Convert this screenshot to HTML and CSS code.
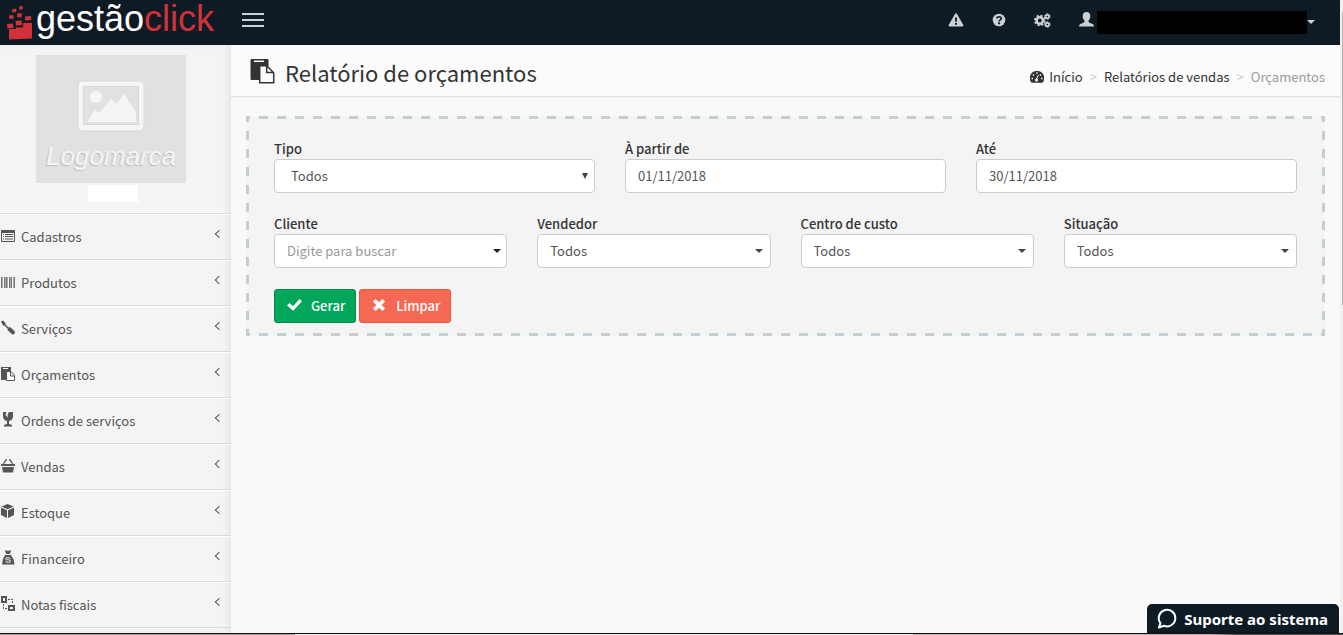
FILE: index.html
```
<!DOCTYPE html>
<html lang="pt-BR">
<head>
    <meta charset="UTF-8">
    <meta name="viewport" content="width=device-width, initial-scale=1.0">
    <title>Relatório de orçamentos</title>
    <link rel="stylesheet" href="styles.css">
</head>
<body>
    <header class="topbar">
        <a href="#" class="brand">
            <svg class="brand-mark" width="26" height="34" viewBox="0 0 26 34" fill="#d13239">
                <path d="M2 33.500V23h7v-2h7v-4h9v15.500z"/>
                <path d="M0 18l6-.5.5 4.500-6 .5zM8.500 15l6-.5.5 4.500-6 .5zM18 10.500l6-.5.3 4-6 .5zM2 9.500l4-.5 1 3.500-4.500.5zM10.500 7l4.500.5-.5 4-4.500-.5zM5 3.500l4-1 .5 3.500-4 .5zM12 .5l3.500-.5.5 3-3.500 1z"/>
                <path d="M9 21.500h7V17" stroke="#861f2a" fill="none"/>
            </svg>
            <span class="brand-name">gestão<span class="brand-red">click</span></span>
        </a>
        <button type="button" class="menu-toggle" aria-label="Menu"><span></span><span></span><span></span></button>
        <nav class="top-actions">
            <a href="#" aria-label="Alertas">
                <svg width="16" height="14" viewBox="0 0 16 14"><path fill="currentColor" fill-rule="evenodd" d="M8 0.300c.4 0 .7.2.9.500l6.400 11.200c.4.700 0 1.500-.9 1.500H1.600c-.9 0-1.300-.8-.9-1.500L7.100.8c.2-.3.500-.5.900-.5zM7 4.500l.3 4.500h1.400L9 4.500zM7 10v1.800h2V10z"/></svg>
            </a>
            <a href="#" aria-label="Ajuda">
                <svg width="14" height="14" viewBox="0 0 14 14"><circle cx="7" cy="7" r="6.300" fill="currentColor"/><path d="M4.900 5.400C5 3.200 9.200 3.200 9.200 5.400 9.200 6.800 7.100 6.900 7.100 8.500" fill="none" stroke="#0e1b25" stroke-width="1.700"/><path fill="#0e1b25" d="M6.100 9.400h2v1.800h-2z"/></svg>
            </a>
            <a href="#" aria-label="Configurações">
                <svg width="17" height="15" viewBox="0 0 17 15" fill="none" stroke="currentColor"><circle cx="5.800" cy="7.500" r="3.200" stroke-width="2.600"/><circle cx="5.800" cy="7.500" r="4.900" stroke-width="1.800" stroke-dasharray="2.200 1.650"/><circle cx="13.300" cy="3.500" r="1.700" stroke-width="1.700"/><circle cx="13.300" cy="3.500" r="2.800" stroke-dasharray="1.700 1.230"/><circle cx="13.300" cy="11.500" r="1.700" stroke-width="1.700"/><circle cx="13.300" cy="11.500" r="2.800" stroke-dasharray="1.700 1.230"/></svg>
            </a>
            <a href="#" class="user" aria-label="Usuário">
                <svg width="15" height="15" viewBox="0 0 15 15"><path fill="currentColor" d="M7.500 0C9.900 0 11.300 1.500 11.300 4c0 2-.8 3.600-1.800 4.700v1.400c.8.900 3.600 1.300 4.800 2.400.5.500.7 1.200.7 2H0c0-.8.200-1.500.7-2 1.200-1.100 4-1.500 4.800-2.400V8.700C4.500 7.600 3.700 6 3.700 4 3.700 1.500 5.100 0 7.500 0z"/></svg>
                <span class="user-name"></span>
                <span class="caret"></span>
            </a>
        </nav>
    </header>

    <div class="wrapper">
        <aside class="sidebar">
            <div class="company">
                <div class="company-logo">
                    <svg width="68" height="52" viewBox="0 0 68 52">
                        <rect x="1" y="1" width="66" height="50" rx="4" fill="#f5f5f5" stroke="#d9d9d9"/>
                        <path fill="#e1e1e1" stroke="#d6d6d6" d="M6.500 6.500h55v38h-55z"/>
                        <circle cx="19" cy="17" r="6" fill="#f5f5f5"/>
                        <path fill="#f5f5f5" d="M10 42l8-12 4 3 12-14 5 5 8-10 12 18v10z"/>
                    </svg>
                    <span>Logomarca</span>
                </div>
                <div class="company-name"></div>
            </div>
            <nav class="menu">
                <a href="#">
                    <svg viewBox="0 0 16 16"><path fill="currentColor" fill-rule="evenodd" d="M2 2h12q1 0 1 1v10q0 1-1 1H2q-1 0-1-1V3q0-1 1-1zm0 3v8h12V5z"/><path stroke="currentColor" d="M3 6.500h1M5 6.500h8M3 8.500h1M5 8.500h8M3 11h1M5 11h8"/></svg>
                    <span>Cadastros</span>
                </a>
                <a href="#">
                    <svg viewBox="0 0 16 16"><path stroke="#777" d="M1.500 3v11M4.500 3v11M6.500 3v11M9.500 3v11M11.500 3v11"/><path stroke="#aaa" d="M2.500 3v11M5.500 3v11M7.500 3v11M10.500 3v11M13.500 3v11"/><path stroke="#777" d="M14.500 3v11"/></svg>
                    <span>Produtos</span>
                </a>
                <a href="#">
                    <svg viewBox="0 0 16 16"><path fill="currentColor" d="M1 1.500l2-1 2.500 2.500v1.500l3 3 1.500-.4 4.500 4c1.500 2-.8 4.500-2.800 3L7.500 10l.2-1.300L4.300 5.500l-1.300.1z"/></svg>
                    <span>Serviços</span>
                </a>
                <a href="#">
                    <svg viewBox="0 0 16 16"><path fill="currentColor" d="M1 1h10v4H7v9H1z"/><path fill="#f4f4f4" d="M3 2h5v1H3z"/><path fill="#fff" stroke="currentColor" d="M6.500 5.500h4.500l3.500 4v5h-8zM10.500 6v4h4"/></svg>
                    <span>Orçamentos</span>
                </a>
                <a href="#">
                    <svg viewBox="0 0 16 16"><path fill="currentColor" d="M3 0h3.500L5.500 3l2.500 2.500L7.500 2.500 9 0h4v4c0 3-1.500 4.500-4 5v3l3 1v1.500H4V13l3-1V9C4.500 8.500 3 7 3 4z"/></svg>
                    <span>Ordens de serviços</span>
                </a>
                <a href="#">
                    <svg viewBox="0 0 16 16"><path fill="none" stroke="currentColor" stroke-width="1.300" d="M3.500 6L6 1.500M12.500 6L10 1.500M6 2h1M9 2h1"/><path fill="currentColor" d="M1 6h14v2H1zM2 9h12l-1 5.500H3z"/></svg>
                    <span>Vendas</span>
                </a>
                <a href="#">
                    <svg viewBox="0 0 16 16"><path fill="currentColor" d="M7.500 0l6 2.500-6 2.700-6-2.700zM1 3.500l6 2.800V14l-6-3zM14 3.500L8 6.300V14l6-3z"/></svg>
                    <span>Estoque</span>
                </a>
                <a href="#">
                    <svg viewBox="0 0 16 16"><path fill="currentColor" d="M5 0l3 1 3-1-1 4H6zM5 5h6l2.500 4 1 5.500H2l1-5.500z"/><path fill="none" stroke="#f4f4f4" d="M10.500 8.500c-2-1.500-5-1-5 .5s5 0 5 2-3.500 1.500-5 .5"/></svg>
                    <span>Financeiro</span>
                </a>
                <a href="#">
                    <svg viewBox="0 0 16 16"><path fill="none" stroke="currentColor" stroke-width="2" d="M2 1h4v5H2zM9 10h5v4H9z"/><path stroke="currentColor" stroke-dasharray="2 1" fill="none" d="M8 3.500h4.500V8M3.500 8v4.500h4"/></svg>
                    <span>Notas fiscais</span>
                </a>
            </nav>
        </aside>

        <main class="content">
            <div class="content-header">
                <h1>
                    <svg width="25" height="25" viewBox="0 0 25 25"><path fill="currentColor" d="M1.500 0h16q1 0 1 1v6h-8v14H1.500q-1 0-1-1V1q0-1 1-1z"/><path fill="#fbfbfb" d="M4 1.500h10V3H4z"/><path fill="#fbfbfb" stroke="currentColor" stroke-width="1.500" d="M9.700 6.700h7l7 7v10h-14zM16.700 7v6.500h7"/></svg>
                    Relatório de orçamentos
                </h1>
                <ol class="breadcrumb">
                    <li><a href="#">
                        <svg width="14" height="12" viewBox="0 0 14 12"><path fill="currentColor" d="M7 0a7 7 0 0 1 6 11l-.5.800h-11L1 11A7 7 0 0 1 7 0z"/><path fill="none" stroke="#fbfbfb" stroke-width="1.500" d="M1.500 7.500H3M3 3.500l1 1M6.300 2h1.400M10 4.500l1-1M11 7.500h1.500"/><path fill="none" stroke="#fbfbfb" d="M6 9l2.500-5"/><circle cx="6.500" cy="9" r="1.500" fill="#fbfbfb"/></svg>
                        Início</a></li>
                    <li><a href="#">Relatórios de vendas</a></li>
                    <li class="active">Orçamentos</li>
                </ol>
            </div>

            <form class="filters">
                <div class="row">
                    <div class="field">
                        <label for="tipo">Tipo</label>
                        <div class="control native">
                            <select id="tipo"><option>Todos</option></select>
                        </div>
                    </div>
                    <div class="field">
                        <label for="de">À partir de</label>
                        <input type="text" id="de" value="01/11/2018">
                    </div>
                    <div class="field">
                        <label for="ate">Até</label>
                        <input type="text" id="ate" value="30/11/2018">
                    </div>
                </div>
                <div class="row">
                    <div class="field">
                        <label for="cliente">Cliente</label>
                        <div class="control dark">
                            <input type="text" id="cliente" placeholder="Digite para buscar">
                        </div>
                    </div>
                    <div class="field">
                        <label for="vendedor">Vendedor</label>
                        <div class="control">
                            <select id="vendedor"><option>Todos</option></select>
                        </div>
                    </div>
                    <div class="field">
                        <label for="centro">Centro de custo</label>
                        <div class="control">
                            <select id="centro"><option>Todos</option></select>
                        </div>
                    </div>
                    <div class="field">
                        <label for="situacao">Situação</label>
                        <div class="control">
                            <select id="situacao"><option>Todos</option></select>
                        </div>
                    </div>
                </div>
                <div class="buttons">
                    <button type="button" class="btn btn-success">
                        <svg width="15" height="14" viewBox="0 0 15 14"><path fill="currentColor" d="M0 7.500L2.500 5 6 8.300 12.500 1 15 3.300 6.200 12.800z"/></svg>
                        Gerar
                    </button>
                    <button type="button" class="btn btn-danger">
                        <svg width="15" height="14" viewBox="0 0 15 14"><path fill="currentColor" d="M1 3.500L3.500 1 7 4.200 10.500 1 13 3.500 9.700 7 13 10.500 10.500 13 7 9.700 3.500 13 1 10.500 4.300 7z"/></svg>
                        Limpar
                    </button>
                </div>
            </form>
        </main>
    </div>

    <div class="scrollbar"></div>
    <button type="button" class="support">
        <svg width="20" height="21" viewBox="0 0 20 21"><path fill="none" stroke="currentColor" stroke-width="2" stroke-linejoin="round" d="M3.500 15.200A8.300 8.300 0 1 1 7 17.800L1.800 19.500z"/></svg>
        Suporte ao sistema
    </button>
    <div class="bottom-edge"></div>
</body>
</html>
```
FILE: styles.css
```
* {
    box-sizing: border-box;
}

body {
    margin: 0;
    padding-right: 3px;
    height: 100vh;
    overflow: hidden;
    display: flex;
    flex-direction: column;
    font-family: "Noto Sans CJK SC", sans-serif;
    font-size: 13px;
    line-height: 20px;
    color: #333;
    background-color: #f9f9f9;
}

a {
    color: inherit;
    text-decoration: none;
}

svg {
    display: block;
    flex: none;
}

input,
select,
button {
    font: inherit;
}

/* topbar */
.topbar {
    display: flex;
    flex: none;
    align-items: center;
    height: 45px;
    padding: 0 24px 0 7px;
    background-color: #0e1b25;
    color: #ccd0d3;
}

.brand {
    display: flex;
    align-items: center;
    gap: 3px;
    height: 45px;
}

.brand-name {
    font-family: "Liberation Sans", Arial, sans-serif;
    font-size: 36px;
    line-height: 36px;
    padding-bottom: 8px;
    color: #fff;
}

.brand-red {
    color: #d13239;
}

.menu-toggle {
    display: flex;
    flex-direction: column;
    gap: 4px;
    margin-left: 28px;
    margin-bottom: 5px;
    padding: 0;
    border: none;
    background: none;
}

.menu-toggle span {
    width: 22px;
    height: 2px;
    background-color: #ccd0d3;
}

.top-actions {
    display: flex;
    align-items: center;
    gap: 28px;
    margin-left: auto;
    padding-bottom: 5px;
}

.user {
    display: flex;
    align-items: center;
    height: 24px;
}

.user svg {
    margin-bottom: 2px;
}

.user-name {
    width: 210px;
    height: 23px;
    margin: 4px 0 0 3px;
    background-color: #000;
}

.caret {
    border: 4px solid transparent;
    border-top-color: currentColor;
    border-bottom: none;
    margin: 4px 1px 0 0;
}

/* sidebar */
.wrapper {
    display: flex;
    flex: 1;
    min-height: 0;
}

.sidebar {
    flex: none;
    width: 231px;
    overflow: hidden;
    background-color: #f4f4f4;
    box-shadow: inset -4px 0 8px -2px rgba(0, 0, 0, 0.07);
    color: #555;
}

.company {
    display: flex;
    flex-direction: column;
    align-items: center;
    gap: 2px;
    padding: 10px 9px 11px 0;
}

.company-logo {
    display: flex;
    flex-direction: column;
    align-items: center;
    gap: 9px;
    width: 150px;
    height: 128px;
    padding-top: 25px;
    background-color: #e1e1e1;
    font: italic 26px/30px "Liberation Sans", Arial, sans-serif;
    color: #f5f5f5;
    text-shadow: -1px 1px 1px #bbb;
}

.company-name {
    width: 50px;
    height: 17px;
    margin-left: 4px;
    background-color: #fff;
}

.menu a {
    display: flex;
    align-items: center;
    gap: 5px;
    height: 46px;
    padding: 0 9px 0 0;
    border-top: 1px solid #d8d8d8;
    box-shadow: inset 0 1px #fff;
}

.menu a:last-child {
    height: 47px;
    border-bottom: 1px solid #d8d8d8;
}

.menu svg {
    width: 16px;
    height: 16px;
    margin-bottom: 2px;
}

.menu a::after {
    content: "";
    width: 5px;
    height: 5px;
    margin: 0 0 6px auto;
    border: solid #555;
    border-width: 0 0 1px 1px;
    transform: rotate(45deg);
}

/* content */
.content {
    flex: 1;
    min-width: 0;
}

.content-header {
    display: flex;
    align-items: center;
    justify-content: space-between;
    height: 52px;
    padding: 0 15px 0 19px;
    background-color: #fbfbfb;
    border-bottom: 1px solid #e2e2e2;
    box-shadow: 0 1px 1px rgba(0, 0, 0, 0.04);
}

.content-header h1 {
    display: flex;
    align-items: center;
    gap: 10px;
    margin: 0;
    padding-top: 2px;
    font-size: 22px;
    line-height: 30px;
    font-weight: 400;
}

.breadcrumb {
    display: flex;
    margin: 0;
    padding: 13px 0 0;
    list-style: none;
}

.breadcrumb li,
.breadcrumb a {
    display: flex;
    align-items: center;
}

.breadcrumb a {
    gap: 5px;
}

.breadcrumb li + li::before {
    content: ">";
    padding: 0 7px;
    color: #ccc;
}

.breadcrumb .active {
    color: #999;
}

/* dashed box: 9px dashes with 9px gaps on the four sides */
.filters {
    --h-dash: repeating-linear-gradient(90deg, #c3ced5 0 4px, transparent 4px 13px, #c3ced5 13px 18px);
    --v-dash: repeating-linear-gradient(#c3ced5 0 6px, transparent 6px 15px, #c3ced5 15px 18px);
    margin: 19px 15px 0;
    padding: 23px 28px 13px;
    background:
        var(--h-dash) top / 100% 3px no-repeat,
        var(--h-dash) bottom / 100% 3px no-repeat,
        var(--v-dash) left / 3px 100% no-repeat,
        var(--v-dash) right / 3px 100% no-repeat,
        #f4f4f4;
}

.row {
    display: flex;
    gap: 30px;
    margin-bottom: 21px;
}

.field {
    flex: 1;
    min-width: 0;
}

.field label {
    display: block;
    font-weight: 500;
}

.field input,
.field select {
    display: block;
    width: 100%;
    height: 34px;
    padding: 0 12px;
    border: 1px solid #ccc;
    border-radius: 4px;
    background-color: #fff;
    color: #555;
    appearance: none;
}

.field input {
    padding-bottom: 2px;
}

.field input::placeholder {
    color: #999;
}

.control {
    position: relative;
}

.control::after {
    content: "";
    position: absolute;
    top: 15px;
    right: 8px;
    border: 4px solid transparent;
    border-top-color: #444;
    border-bottom: none;
}

.control.dark::after {
    right: 6px;
    border-top-color: #222;
}

.control.native::after {
    top: 14px;
    right: 7px;
    border-width: 6px 3px 0;
}

.control.native select {
    padding-left: 16px;
}

.buttons {
    display: flex;
    gap: 3px;
}

.btn {
    display: flex;
    align-items: center;
    gap: 9px;
    height: 34px;
    padding: 0 10px 0 12px;
    border: 1px solid;
    border-radius: 3px;
    font-weight: 500;
    color: #fff;
}

.btn svg {
    margin-bottom: 2px;
}

.btn-success {
    background-color: #00a65a;
    border-color: #008d4c;
}

.btn-danger {
    background-color: #f56954;
    border-color: #f4543c;
}

/* pieces fixed over the page */
.scrollbar {
    position: fixed;
    top: 0;
    right: 0;
    bottom: 0;
    width: 3px;
    padding: 12px 0 0 2px;
    background-color: #f1f1f1;
}

.scrollbar::before {
    content: "";
    display: block;
    height: 47%;
    background-color: #b5b5b5;
}

.support {
    position: fixed;
    right: 4px;
    bottom: 2px;
    display: flex;
    align-items: center;
    gap: 7px;
    height: 29px;
    padding: 0 11px 0 10px;
    border: none;
    border-radius: 5px 5px 0 0;
    background-color: #0e1b25;
    color: #fff;
    font-family: "Noto Sans", sans-serif;
    font-size: 15px;
    font-weight: 700;
}

.bottom-edge {
    position: fixed;
    left: 0;
    right: 0;
    bottom: 0;
    height: 2px;
    border-top: 1px solid #111;
    background: linear-gradient(90deg, #a89a9a 22%, #eee 22% 68%, #c4b0b0 68% 90%, #555 92%);
}
```
